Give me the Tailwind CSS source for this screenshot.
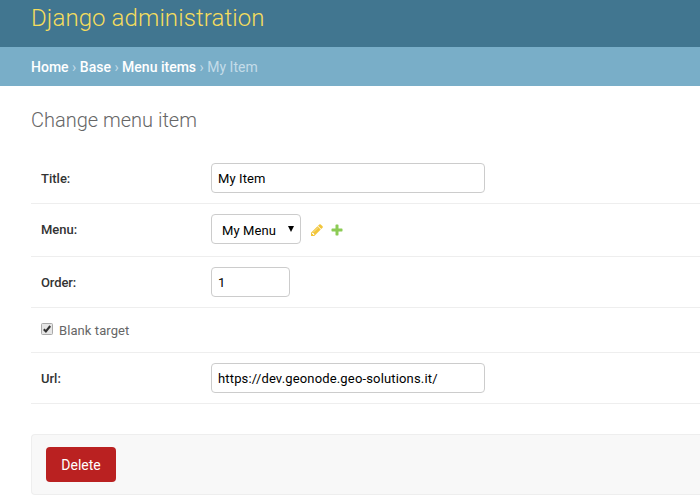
<!DOCTYPE html>
<html lang="en">
<head>
<meta charset="utf-8">
<title>Change menu item | Django administration</title>
<script src="https://cdn.jsdelivr.net/npm/@tailwindcss/browser@4"></script>
</head>
<body class="h-[504px] w-[700px] overflow-hidden bg-white font-[Roboto,sans-serif] text-[13px] text-[#333]">
<header class="flex h-[47px] items-start bg-[#417690] pl-[31px] pt-[3px]">
  <h1 class="text-[24px] leading-[30px] font-light tracking-[0.1px] text-[#f5dd5d]">Django administration</h1>
</header>
<nav class="flex h-[39px] items-center gap-[3.5px] bg-[#79aec8] pt-[2px] pl-[31px] text-[14px] text-[#c4dce8]">
  <a class="font-medium text-white">Home</a><span>›</span><a class="font-medium text-white">Base</a><span>›</span><a class="font-medium text-white">Menu items</a><span>›</span><span>My Item</span>
</nav>
<main class="pl-[31px] pt-[21px]">
  <h2 class="mb-[20px] h-[26px] text-[20px] leading-[26px] font-light text-[#666]">Change menu item</h2>
  <form>
    <div class="flex h-[51px] border-b border-[#eee] pl-[10px] pt-[10px]">
      <label class="w-[170px] leading-[32px] font-medium">Title:</label>
      <input class="h-[30px] w-[274px] rounded-[4px] border border-[#ccc] px-[6px] text-[13px] tracking-[0.1px] text-black" value="My Item">
    </div>
    <div class="flex h-[53px] border-b border-[#eee] pl-[10px] pt-[10px]">
      <label class="w-[170px] leading-[32px] font-medium">Menu:</label>
      <div class="flex h-[30px] w-[90px] items-center justify-between rounded-[4px] border border-[#ccc] pl-[10px] pr-[6px] text-black">
        <span class="pt-[3px] tracking-[0.1px]">My Menu</span>
        <svg class="h-[6px] w-[6px]" viewBox="0 0 6 6"><path d="M0 0h6L3 6z"/></svg>
      </div>
      <svg class="mt-[9px] ml-[9px] h-[14px] w-[14px] opacity-80" viewBox="0 0 1792 1792" fill="#efb80b"><path d="M491 1536l91-91-235-235-91 91v107h128v128h107zm523-928q0-22-22-22-10 0-17 7l-542 542q-7 7-7 17 0 22 22 22 10 0 17-7l542-542q7-7 7-17zm-54-192l416 416-832 832h-416v-416zm683 96q0 53-37 90l-166 166-416-416 166-165q36-38 90-38 53 0 91 38l235 234q37 39 37 91z"/></svg>
      <svg class="mt-[9px] ml-[6px] h-[14px] w-[14px] opacity-80" viewBox="0 0 1792 1792" fill="#70bf2b"><path d="M1600 796v192q0 40-28 68t-68 28h-416v416q0 40-28 68t-68 28h-192q-40 0-68-28t-28-68v-416h-416q-40 0-68-28t-28-68v-192q0-40 28-68t68-28h416v-416q0-40 28-68t68-28h192q40 0 68 28t28 68v416h416q40 0 68 28t28 68z"/></svg>
    </div>
    <div class="flex h-[51px] border-b border-[#eee] pl-[10px] pt-[10px]">
      <label class="w-[170px] leading-[32px] font-medium tracking-[-0.1px]">Order:</label>
      <input class="h-[30px] w-[79px] rounded-[4px] border border-[#ccc] px-[6px] text-[13px] text-black" value="1">
    </div>
    <div class="flex h-[45px] items-center border-b border-[#eee] pl-[10px] text-[#666]">
      <svg class="mr-[6px] mb-[2px] h-[12px] w-[12px]" viewBox="0 0 12 12"><rect x=".5" y=".5" width="11" height="11" rx="1" fill="#e6e6e6" stroke="#a9a9a9"/><path d="M2.8 6.2l2.1 2.2L9.2 3" fill="none" stroke="#333" stroke-width="2.1"/></svg>
      <label class="pt-[2px] tracking-[0.08px]">Blank target</label>
    </div>
    <div class="flex h-[51px] border-b border-[#eee] pl-[10px] pt-[10px]">
      <label class="w-[170px] leading-[32px] font-medium">Url:</label>
      <input class="h-[30px] w-[274px] rounded-[4px] border border-[#ccc] px-[6px] text-[13px] tracking-[0.16px] text-black" value="https://dev.geonode.geo-solutions.it/">
    </div>
    <div class="mt-[30px] h-[61px] rounded-l-[4px] border border-r-0 border-[#eee] bg-[#f8f8f8] pt-[12px] pl-[14px]">
      <button type="button" class="h-[35px] w-[70px] rounded-[4px] bg-[#ba2121] pt-[2px] text-[14px] text-white">Delete</button>
    </div>
  </form>
</main>
</body>
</html>
